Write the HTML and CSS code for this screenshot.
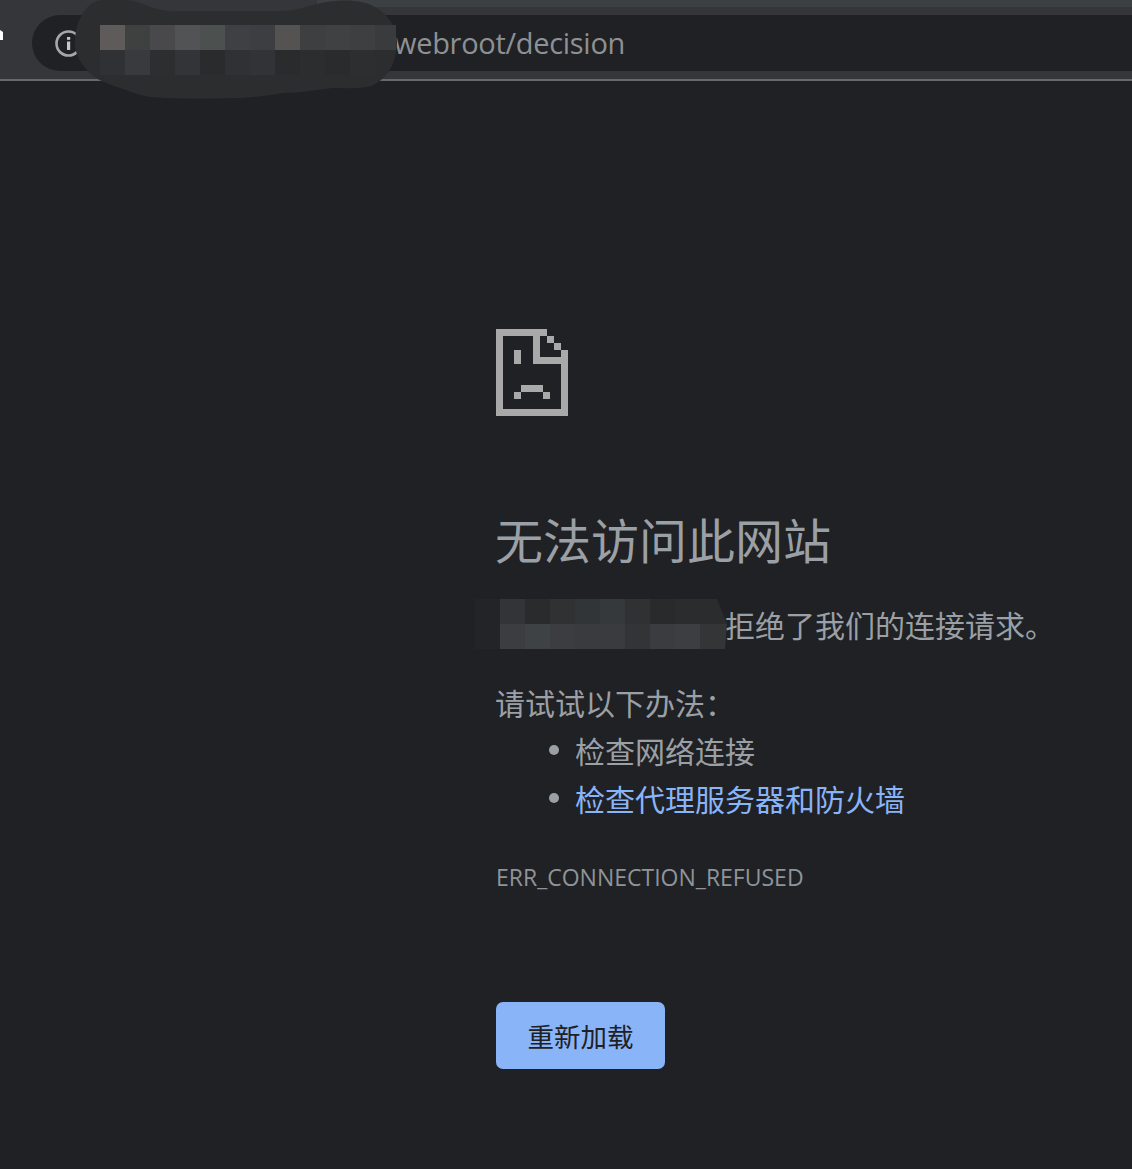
FILE: index.html
```html
<!DOCTYPE html>
<html lang="zh-CN">
<head>
  <meta charset="UTF-8">
  <title>无法访问此网站</title>
  <link rel="stylesheet" href="styles.css">
</head>
<body>

  <!-- toolbar -->
  <header class="toolbar">
    <div class="tab-strip"><div class="tab-edge"></div></div>
    <div class="address-row">
      <span class="back-mark"></span>
      <div class="address-bar">
        <svg class="info-icon" viewBox="0 0 27 27" fill="none">
          <circle cx="13.5" cy="13.5" r="12" stroke="#a4a8ac" stroke-width="2.6"/>
          <rect x="12" y="11.5" width="3.2" height="8.5" fill="#c4c7ca"/>
          <rect x="12" y="7" width="3.2" height="2.8" fill="#c4c7ca"/>
        </svg>
        <span class="url">webroot/decision</span>
      </div>
    </div>
    <div class="toolbar-line"></div>

    <!-- scribble + mosaic over the host name -->
    <svg class="host-mask" viewBox="0 0 330 100">
      <path fill="#2c2d2f" d="M0 43C0 22 10 5 22 1C32 -2 50 -1 62 2C74 6 84 11 96 11L206 11C222 11 232 6 246 3C256 1 266 0 279 1C302 2 322 20 322 42C322 66 308 84 292 87C280 89 270 88 258 88C240 90 225 93 208 93C190 96 175 98 158 98C130 99 100 99 75 97C62 95 52 90 42 87C28 82 18 78 12 70C5 62 0 54 0 43Z"/>
      <g shape-rendering="crispEdges">
        <rect x="25" y="25" width="25" height="25" fill="#5e5b5a"/>
        <rect x="50" y="25" width="25" height="25" fill="#3f4141"/>
        <rect x="75" y="25" width="25" height="25" fill="#49484b"/>
        <rect x="100" y="25" width="25" height="25" fill="#525354"/>
        <rect x="125" y="25" width="25" height="25" fill="#4c514f"/>
        <rect x="150" y="25" width="25" height="25" fill="#3f4043"/>
        <rect x="175" y="25" width="25" height="25" fill="#3d3e41"/>
        <rect x="200" y="25" width="25" height="25" fill="#545351"/>
        <rect x="225" y="25" width="25" height="25" fill="#3e3f40"/>
        <rect x="250" y="25" width="25" height="25" fill="#404142"/>
        <rect x="275" y="25" width="25" height="25" fill="#3e3f40"/>
        <rect x="300" y="25" width="21" height="25" fill="#3a3b3d"/>
        <rect x="25" y="50" width="25" height="25" fill="#303134"/>
        <rect x="50" y="50" width="25" height="25" fill="#393a3d"/>
        <rect x="75" y="50" width="25" height="25" fill="#2d2e30"/>
        <rect x="100" y="50" width="25" height="25" fill="#333437"/>
        <rect x="125" y="50" width="25" height="25" fill="#2a2b2d"/>
        <rect x="150" y="50" width="25" height="25" fill="#303134"/>
        <rect x="175" y="50" width="25" height="25" fill="#323336"/>
        <rect x="200" y="50" width="25" height="25" fill="#2a2b2d"/>
        <rect x="225" y="50" width="25" height="25" fill="#2c2d2f"/>
        <rect x="250" y="50" width="25" height="25" fill="#2a2b2d"/>
        <rect x="275" y="50" width="25" height="25" fill="#2d2e30"/>
      </g>
    </svg>
  </header>

  <!-- error page -->
  <main class="error-page">
    <svg class="sad-file" viewBox="0 0 72 87" shape-rendering="crispEdges" fill="#a9a9a9">
      <rect x="0" y="0" width="51" height="7"/>
      <rect x="0" y="0" width="7" height="87"/>
      <rect x="0" y="80" width="72" height="7"/>
      <rect x="65" y="21" width="7" height="66"/>
      <rect x="51" y="7" width="7" height="7"/>
      <rect x="58" y="14" width="7" height="7"/>
      <rect x="37" y="0" width="7" height="35"/>
      <rect x="37" y="28" width="30" height="7"/>
      <rect x="18" y="21" width="7" height="14"/>
      <rect x="25" y="56" width="22" height="7"/>
      <rect x="18" y="63" width="7" height="7"/>
      <rect x="47" y="63" width="7" height="7"/>
    </svg>

    <h1 class="error-title">无法访问此网站</h1>

    <p class="error-reason">
      <svg class="host-blur" viewBox="0 0 252 50" shape-rendering="crispEdges">
        <rect x="0" y="0" width="25" height="50" fill="#232427"/>
        <rect x="25" y="0" width="25" height="25" fill="#333437"/>
        <rect x="50" y="0" width="25" height="25" fill="#2a2b2d"/>
        <rect x="75" y="0" width="25" height="25" fill="#303133"/>
        <rect x="100" y="0" width="25" height="25" fill="#323538"/>
        <rect x="125" y="0" width="25" height="25" fill="#36393c"/>
        <rect x="150" y="0" width="25" height="25" fill="#303133"/>
        <rect x="175" y="0" width="25" height="25" fill="#292a2c"/>
        <rect x="200" y="0" width="25" height="25" fill="#2b2c2e"/>
        <rect x="225" y="0" width="27" height="25" fill="#2b2c2e"/>
        <rect x="25" y="25" width="25" height="25" fill="#3b3d40"/>
        <rect x="50" y="25" width="25" height="25" fill="#3f4245"/>
        <rect x="75" y="25" width="25" height="25" fill="#3b3d40"/>
        <rect x="100" y="25" width="25" height="25" fill="#3a3b3e"/>
        <rect x="125" y="25" width="25" height="25" fill="#3a3b3e"/>
        <rect x="150" y="25" width="25" height="25" fill="#333436"/>
        <rect x="175" y="25" width="25" height="25" fill="#3a3c3f"/>
        <rect x="200" y="25" width="25" height="25" fill="#3c3e41"/>
        <rect x="225" y="25" width="27" height="25" fill="#343537"/>
      </svg>
      拒绝了我们的连接请求。
    </p>

    <p class="try-title">请试试以下办法：</p>
    <ul class="try-list">
      <li class="try-item">检查网络连接</li>
      <li class="try-item"><a class="try-link" href="#">检查代理服务器和防火墙</a></li>
    </ul>

    <div class="error-code">ERR_CONNECTION_REFUSED</div>

    <button class="reload-button" type="button">重新加载</button>
  </main>

</body>
</html>
```

FILE: styles.css
```css
/* reset */
* { margin:0; padding:0; box-sizing:border-box; }
html, body { width:100%; min-height:100vh; }

body {
  background:#202124;
  color:#9aa0a6;
  font-family:'Noto Sans CJK SC','Noto Sans',sans-serif;
  overflow:hidden;
}

/* toolbar */
.toolbar { position:relative; height:81px; background:#35363a; }
.tab-strip { height:15px; display:flex; }
.tab-edge { margin-left:317px; flex:1; height:7px; background:#3c4043; }
.address-row { height:56px; display:flex; align-items:stretch; }
.back-mark {
  width:32px; height:10px; margin-top:15px;
  border-left:3px solid #fff;
  border-top:2px solid transparent;
}
.address-bar {
  flex:1; display:flex; align-items:center;
  background:#202124;
  border-radius:28px 0 0 28px;
  padding-left:23px;
}
.info-icon { width:27px; height:27px; flex:none; }
.url {
  margin-left:312px; margin-top:-2px;
  font-family:'Open Sans',sans-serif;
  font-size:29px; color:#8e9194;
  letter-spacing:-.3px;
}
.toolbar-line { height:2px; margin-top:8px; background:#66686b; }

.host-mask {
  position:absolute; top:0; left:75px;
  width:330px; height:100px;
}

/* error page */
.error-page { padding:248px 0 0 496px; }

.sad-file { display:block; width:72px; height:87px; }

.error-title {
  margin-top:88px;
  font-size:48px; font-weight:400; line-height:68px;
  color:#9aa0a6;
  margin-left:-1px;
}

.error-reason {
  position:relative;
  margin-top:27px;
  padding-left:229px;
  font-size:30px; font-weight:400; line-height:50px;
  white-space:nowrap;
}
.host-blur {
  position:absolute; top:0; left:-21px;
  width:252px; height:50px;
  clip-path:polygon(0 0,242px 0,252px 25px,250px 50px,0 50px);
}

.try-title {
  margin-top:29px; margin-left:-1px;
  font-size:30px; font-weight:400; line-height:48px;
}
.try-list {
  list-style:none;
  padding-left:53px;
  font-size:30px; font-weight:400; line-height:48px;
}
.try-item { display:flex; align-items:center; gap:16px; }
.try-item::before {
  content:""; width:10px; height:10px;
  border-radius:50%; background:#9aa0a6;
}
.try-link { color:#8ab4f8; text-decoration:none; }

.error-code {
  margin-top:39px;
  font-family:'Open Sans',sans-serif;
  font-size:23px; line-height:32px;
  color:#8e9499;
}

.reload-button {
  display:block;
  margin-top:109px;
  width:169px; height:67px;
  background:#8ab4f8; color:#202124;
  border:none; border-radius:7px;
  font-family:inherit; font-size:26.5px; font-weight:400;
}
```
